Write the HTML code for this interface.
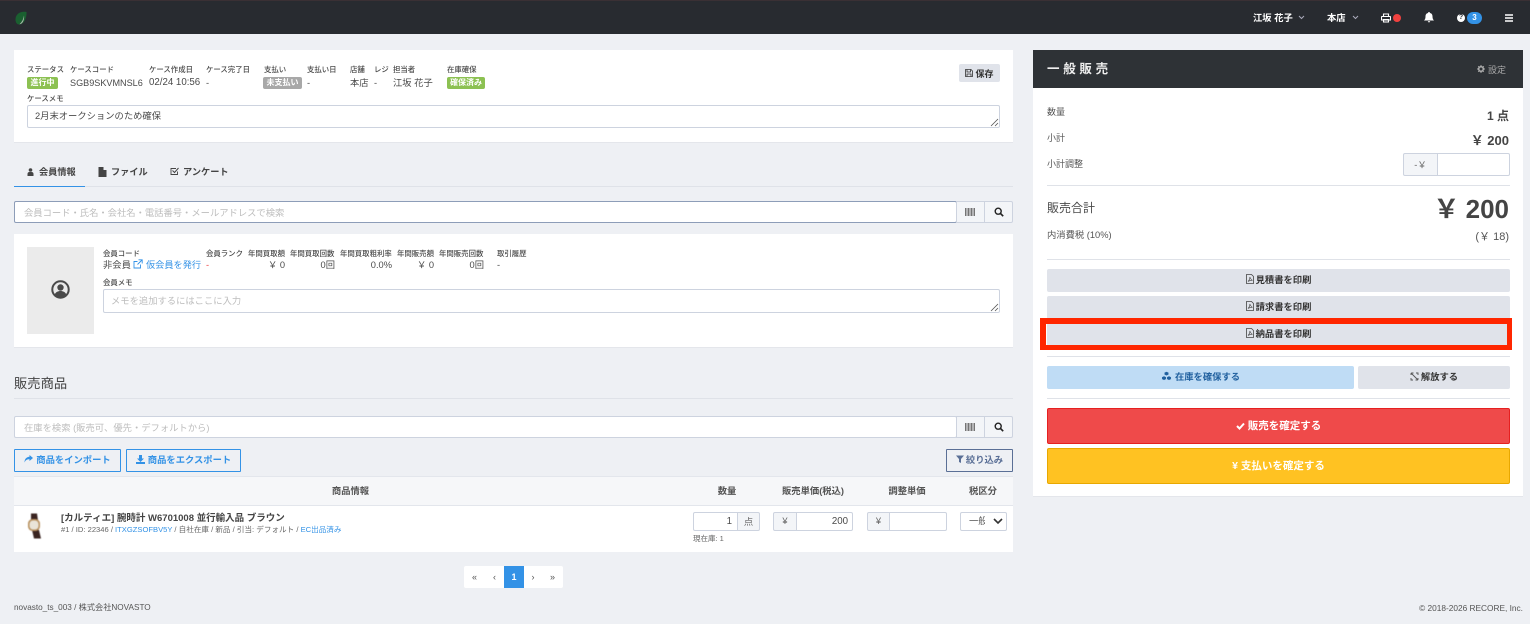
<!DOCTYPE html>
<html lang="ja">
<head>
<meta charset="utf-8">
<title>一般販売</title>
<style>
html,body{margin:0;padding:0;width:1530px;height:624px;overflow:hidden;background:#eef0f4;}
body{position:relative;font-family:"Liberation Sans","Noto Sans CJK JP",sans-serif;color:#4a4a4a;}
.a{position:absolute;box-sizing:border-box;}
.t{position:absolute;white-space:nowrap;line-height:12px;height:12px;}
.r{text-align:right;}
.c{text-align:center;}
.l{font-size:7.400px;color:#4a4a4a;font-weight:500;}
.v{font-size:9.300px;color:#4a4a4a;}
.b{font-weight:700;}
.btn{position:absolute;box-sizing:border-box;border-radius:2px;display:flex;align-items:center;justify-content:center;white-space:nowrap;font-weight:700;}
.p3{padding-bottom:3px;}
.p1{padding-bottom:1px;}
.in{position:absolute;box-sizing:border-box;background:#fff;border:1px solid #cdd3df;border-radius:2px;}
.ad{position:absolute;box-sizing:border-box;background:#f3f5f8;border:1px solid #cdd3df;display:flex;align-items:center;justify-content:center;}
.tx{padding-bottom:2px;}
.hr{position:absolute;height:1px;background:#dfe2e8;}
svg{display:block;flex:none;}
.pg{position:absolute;top:566px;height:22px;display:flex;align-items:center;justify-content:center;font-size:9px;color:#555;}
</style>
</head>
<body>

<!-- navbar -->
<div class="a" style="left:0;top:0;width:1530px;height:34px;background:#282b30;border-top:1px solid #3a3034;"></div>
<svg class="a" style="left:14px;top:11px" width="14" height="14" viewBox="0 0 14 14"><path d="M12.500 1C6.500 0 1.500 3 1.500 8.500c0 3 1.500 5 3.500 5C10 13.500 12.800 7 12.500 1z" fill="#1a6030"/><path d="M10 4.500C9.500 8 8 11 5.500 13.200 8 13.500 10.700 9.500 10 4.500z" fill="#aab5aa"/></svg>
<div class="t b" style="left:1253px;top:12px;font-size:9.300px;color:#fff">江坂 花子</div>
<svg class="a" style="left:1298px;top:15px" width="7" height="5" viewBox="0 0 7 5"><path d="M1 1l2.500 2.500L6 1" fill="none" stroke="#aab" stroke-width="1"/></svg>
<div class="t b" style="left:1327px;top:12px;font-size:9.300px;color:#fff">本店</div>
<svg class="a" style="left:1352px;top:15px" width="7" height="5" viewBox="0 0 7 5"><path d="M1 1l2.500 2.500L6 1" fill="none" stroke="#aab" stroke-width="1"/></svg>
<svg class="a" style="left:1381px;top:13px" width="10" height="10" viewBox="0 0 10 10"><path d="M2.500 3.500V1h5v2.500M1 3.500h8a.5.5 0 0 1 .5.5v3H.5V4a.5.5 0 0 1 .5-.5zM2.500 6.500h5V9h-5z" fill="none" stroke="#fff" stroke-width="1.100"/></svg>
<div class="a" style="left:1393px;top:14px;width:8px;height:8px;border-radius:50%;background:#f0413f"></div>
<svg class="a" style="left:1424px;top:12px" width="10" height="11" viewBox="0 0 10 11"><path d="M5 0a1 1 0 0 1 1 1c2 .5 2.500 2 2.500 3.500 0 2 .5 3 1.500 4H0c1-1 1.500-2 1.500-4C1.500 3 2 1.500 4 1a1 1 0 0 1 1-1zM3.800 9.200h2.400A1.200 1.200 0 0 1 3.800 9.200z" fill="#fff"/></svg>
<div class="a" style="left:1457px;top:14px;width:8px;height:8px;border-radius:50%;background:#fff;color:#282b30;font-size:7px;font-weight:700;line-height:8px;text-align:center">?</div>
<div class="a" style="left:1467px;top:12px;width:15px;height:12px;border-radius:6px;background:#3392e6;color:#fff;font-size:8px;font-weight:700;line-height:12px;text-align:center">3</div>
<svg class="a" style="left:1505px;top:14px" width="8" height="8" viewBox="0 0 8 8"><path d="M0 1h8M0 4h8M0 7h8" stroke="#fff" stroke-width="1.500"/></svg>

<!-- case card -->
<div class="a" style="left:14px;top:50px;width:999px;height:93px;background:#fff;border-bottom:1px solid #e4e6eb"></div>
<div class="t l" style="left:27px;top:64px">ステータス</div>
<div class="t l" style="left:70px;top:64px">ケースコード</div>
<div class="t l" style="left:149px;top:64px">ケース作成日</div>
<div class="t l" style="left:206px;top:64px">ケース完了日</div>
<div class="t l" style="left:264px;top:64px">支払い</div>
<div class="t l" style="left:307px;top:64px">支払い日</div>
<div class="t l" style="left:350px;top:64px">店舗</div>
<div class="t l" style="left:374px;top:64px">レジ</div>
<div class="t l" style="left:393px;top:64px">担当者</div>
<div class="t l" style="left:447px;top:64px">在庫確保</div>
<div class="a b" style="left:27px;top:77px;width:31px;height:12px;background:#8cc152;border-radius:2px;color:#fff;font-size:8px;line-height:12px;text-align:center">進行中</div>
<div class="t v" style="left:70px;top:77px;font-size:9.100px">SGB9SKVMNSL6</div>
<div class="t v" style="left:149px;top:77px;font-size:9.700px">02/24 10:56</div>
<div class="t v" style="left:206px;top:77px">-</div>
<div class="a b" style="left:263px;top:77px;width:39px;height:12px;background:#a8a8a8;border-radius:2px;color:#fff;font-size:8px;line-height:12px;text-align:center">未支払い</div>
<div class="t v" style="left:307px;top:77px">-</div>
<div class="t v" style="left:350px;top:77px">本店</div>
<div class="t v" style="left:374px;top:77px">-</div>
<div class="t v" style="left:393px;top:77px">江坂 花子</div>
<div class="a b" style="left:447px;top:77px;width:38px;height:12px;background:#8cc152;border-radius:2px;color:#fff;font-size:8px;line-height:12px;text-align:center">確保済み</div>
<div class="t l" style="left:27px;top:93px">ケースメモ</div>
<div class="in" style="left:27px;top:105px;width:973px;height:23px"></div>
<div class="t" style="left:35px;top:110px;font-size:9.300px;color:#4a4a4a">2月末オークションのため確保</div>
<svg class="a" style="left:990px;top:118px" width="9" height="9" viewBox="0 0 9 9"><path d="M1 8l7-7M5 8l3-3" stroke="#555" stroke-width=".8"/></svg>
<div class="btn" style="left:959px;top:64px;width:41px;height:18px;background:#e0e3ea;color:#333;font-size:9px;gap:2px"><svg width="8" height="8" viewBox="0 0 8 8"><path d="M.5.5h5.500l1.500 1.500v5.500h-7zM2 .5v2.500h3.500V.5M2 7.500V5h4v2.500" fill="none" stroke="#333" stroke-width=".8"/></svg>保存</div>

<!-- tabs -->
<div class="hr" style="left:14px;top:186px;width:999px"></div>
<div class="a" style="left:14px;top:185.500px;width:71px;height:1.500px;background:#3392e6"></div>
<svg class="a" style="left:27px;top:168px" width="7" height="8" viewBox="0 0 7 8"><circle cx="3.500" cy="2" r="1.800" fill="#444"/><path d="M.5 8V6a2 2 0 0 1 2-2h2a2 2 0 0 1 2 2v2z" fill="#444"/></svg>
<div class="t b" style="left:39px;top:166px;font-size:9.200px;color:#444">会員情報</div>
<svg class="a" style="left:98px;top:167px" width="9" height="10" viewBox="0 0 9 10"><path d="M.5 0h5l3 3v7h-8zM5.500 0v3h3" fill="#444"/></svg>
<div class="t b" style="left:111px;top:166px;font-size:9.200px;color:#444">ファイル</div>
<svg class="a" style="left:170px;top:167px" width="9" height="9" viewBox="0 0 9 9"><path d="M7.500 4.500v3h-6.500v-6h5" fill="none" stroke="#444" stroke-width=".9"/><path d="M2.500 3.500l2 2L8.500 1" fill="none" stroke="#444" stroke-width="1"/></svg>
<div class="t b" style="left:183px;top:166px;font-size:9.200px;color:#444">アンケート</div>

<!-- member search -->
<div class="in" style="left:14px;top:201px;width:943px;height:22px;border-color:#8d9db8"></div>
<div class="t" style="left:24px;top:207px;font-size:9.300px;color:#bdbdbd">会員コード・氏名・会社名・電話番号・メールアドレスで検索</div>
<div class="ad" style="left:956px;top:201px;width:29px;height:22px"><svg width="11" height="8" viewBox="0 0 11 8"><path d="M.5 0v8M2 0v8M3.500 0v8M5 0v8M6.500 0v8M8 0v8M9.500 0v8" stroke="#666" stroke-width=".9"/></svg></div>
<div class="ad" style="left:984px;top:201px;width:29px;height:22px;border-radius:0 2px 2px 0"><svg width="10" height="10" viewBox="0 0 10 10"><circle cx="4.200" cy="4.200" r="3" fill="none" stroke="#222" stroke-width="1.400"/><path d="M6.500 6.500L9.200 9.200" stroke="#222" stroke-width="1.600"/></svg></div>

<!-- member card -->
<div class="a" style="left:14px;top:234px;width:999px;height:114px;background:#fff;border-bottom:1px solid #e4e6eb"></div>
<div class="a" style="left:27px;top:247px;width:67px;height:87px;background:#ebebeb"></div>
<svg class="a" style="left:51px;top:280px" width="19" height="19" viewBox="0 0 19 19"><circle cx="9.500" cy="9.500" r="8.200" fill="none" stroke="#4a4a4a" stroke-width="2"/><circle cx="9.500" cy="7.500" r="3.200" fill="#4a4a4a"/><path d="M3.500 15c1-3 3.500-4 6-4s5 1 6 4c-3 3-9 3-12 0z" fill="#4a4a4a"/></svg>
<div class="t l" style="left:103px;top:248px">会員コード</div>
<div class="t l" style="left:206px;top:248px">会員ランク</div>
<div class="t l" style="left:248px;top:248px">年間買取額</div>
<div class="t l" style="left:290px;top:248px">年間買取回数</div>
<div class="t l" style="left:340px;top:248px">年間買取粗利率</div>
<div class="t l" style="left:397px;top:248px">年間販売額</div>
<div class="t l" style="left:439px;top:248px">年間販売回数</div>
<div class="t l" style="left:497px;top:248px">取引履歴</div>
<div class="t v" style="left:103px;top:259px">非会員</div>
<svg class="a" style="left:133px;top:259px" width="10" height="10" viewBox="0 0 10 10"><path d="M7.500 5.500V9H1V2.500h3.500M5.500.8h3.700v3.700M9 1L4.500 5.500" fill="none" stroke="#3392e6" stroke-width=".9"/></svg>
<div class="t v" style="left:146px;top:259px;color:#3392e6;font-size:9.200px">仮会員を発行</div>
<div class="t v" style="left:206px;top:259px;color:#e44">-</div>
<div class="t v r" style="left:248px;top:259px;width:37px">￥ 0</div>
<div class="t v r" style="left:290px;top:259px;width:45px">0回</div>
<div class="t v r" style="left:340px;top:259px;width:52px">0.0%</div>
<div class="t v r" style="left:397px;top:259px;width:37px">￥ 0</div>
<div class="t v r" style="left:439px;top:259px;width:45px">0回</div>
<div class="t v" style="left:497px;top:259px">-</div>
<div class="t l" style="left:103px;top:277px">会員メモ</div>
<div class="in" style="left:103px;top:289px;width:897px;height:24px"></div>
<div class="t" style="left:111px;top:295px;font-size:9.300px;color:#bdbdbd">メモを追加するにはここに入力</div>
<svg class="a" style="left:990px;top:303px" width="9" height="9" viewBox="0 0 9 9"><path d="M1 8l7-7M5 8l3-3" stroke="#555" stroke-width=".8"/></svg>

<!-- products -->
<div class="t" style="left:14px;top:376px;font-size:13.300px;line-height:16px;height:16px;color:#444">販売商品</div>
<div class="hr" style="left:14px;top:398px;width:999px"></div>
<div class="in" style="left:14px;top:416px;width:943px;height:22px"></div>
<div class="t" style="left:24px;top:422px;font-size:9.300px;color:#bdbdbd">在庫を検索 (販売可、優先・デフォルトから)</div>
<div class="ad" style="left:956px;top:416px;width:29px;height:22px"><svg width="11" height="8" viewBox="0 0 11 8"><path d="M.5 0v8M2 0v8M3.500 0v8M5 0v8M6.500 0v8M8 0v8M9.500 0v8" stroke="#666" stroke-width=".9"/></svg></div>
<div class="ad" style="left:984px;top:416px;width:29px;height:22px;border-radius:0 2px 2px 0"><svg width="10" height="10" viewBox="0 0 10 10"><circle cx="4.200" cy="4.200" r="3" fill="none" stroke="#222" stroke-width="1.400"/><path d="M6.500 6.500L9.200 9.200" stroke="#222" stroke-width="1.600"/></svg></div>

<div class="btn p3" style="left:14px;top:449px;width:107px;height:23px;border:1px solid #3392e6;border-radius:1px;color:#3392e6;font-size:9.300px;gap:3px"><svg width="9" height="8" viewBox="0 0 9 8"><path d="M5.500 0L9 3 5.500 6V4.200C3 4.200 1.500 5 .5 7.500.5 4 2.500 2 5.500 1.800z" fill="#3392e6"/></svg>商品をインポート</div>
<div class="btn p3" style="left:126px;top:449px;width:115px;height:23px;border:1px solid #3392e6;border-radius:1px;color:#3392e6;font-size:9.300px;gap:3px"><svg width="9" height="9" viewBox="0 0 9 9"><path d="M3 0h3v3.500h2L4.500 7 1 3.500h2zM0 7h9v2H0z" fill="#3392e6"/></svg>商品をエクスポート</div>
<div class="btn p3" style="left:946px;top:449px;width:67px;height:23px;border:1px solid #5a6f96;border-radius:1px;color:#5a6f96;font-size:9.300px;gap:2px"><svg width="8" height="8" viewBox="0 0 8 8"><path d="M0 .5h8L5 4v4L3 7V4z" fill="#5a6f96"/></svg>絞り込み</div>

<div class="a" style="left:14px;top:476px;width:999px;height:30px;background:#f6f7f9;border-top:1px solid #e3e6ec;border-bottom:1px solid #e3e6ec"></div>
<div class="t b c" style="left:14px;top:485px;width:673px;font-size:9.300px;color:#555">商品情報</div>
<div class="t b c" style="left:687px;top:485px;width:80px;font-size:9.300px;color:#555">数量</div>
<div class="t b c" style="left:767px;top:485px;width:92px;font-size:9.300px;color:#555">販売単価(税込)</div>
<div class="t b c" style="left:861px;top:485px;width:92px;font-size:9.300px;color:#555">調整単価</div>
<div class="t b c" style="left:953px;top:485px;width:60px;font-size:9.300px;color:#555">税区分</div>

<div class="a" style="left:14px;top:506px;width:999px;height:46px;background:#fff"></div>
<svg class="a" style="left:25px;top:512px;filter:blur(.4px)" width="20" height="28" viewBox="0 0 20 28"><path d="M6 1.500h6l1 7H6zM7 18h7l2 8.500H9z" fill="#3a2420"/><rect x="3" y="7" width="12" height="12" rx="4.500" fill="#b8915f"/><rect x="4.500" y="8.500" width="9" height="9" rx="3.500" fill="#e9e4d8"/></svg>
<div class="t b" style="left:61px;top:513px;font-size:9.500px;color:#444">[カルティエ] 腕時計 W6701008 並行輸入品 ブラウン</div>
<div class="t" style="left:61px;top:524px;font-size:7.600px;color:#666">#1 / ID: 22346 / <span style="color:#3392e6">ITXGZSOFBV5Y</span> / 自社在庫 / 新品 / 引当: デフォルト / <span style="color:#3392e6">EC出品済み</span></div>

<div class="in" style="left:693px;top:512px;width:45px;height:19px;border-radius:2px 0 0 2px"></div>
<div class="t r" style="left:693px;top:516px;width:39px;font-size:9.700px">1</div>
<div class="ad tx" style="left:737px;top:512px;width:23px;height:19px;font-size:9.300px;color:#666;border-radius:0 2px 2px 0">点</div>
<div class="t" style="left:693px;top:533px;font-size:7.500px;color:#666">現在庫: 1</div>

<div class="ad tx" style="left:773px;top:512px;width:24px;height:19px;font-size:9.300px;color:#666;border-radius:2px 0 0 2px">¥</div>
<div class="in" style="left:796px;top:512px;width:57px;height:19px;border-radius:0 2px 2px 0"></div>
<div class="t r" style="left:796px;top:516px;width:52px;font-size:9.700px">200</div>

<div class="ad tx" style="left:867px;top:512px;width:23px;height:19px;font-size:9.300px;color:#666;border-radius:2px 0 0 2px">¥</div>
<div class="in" style="left:889px;top:512px;width:58px;height:19px;border-radius:0 2px 2px 0"></div>

<div class="in" style="left:960px;top:512px;width:47px;height:19px"></div>
<div class="a" style="left:969px;top:515px;width:16px;height:13px;overflow:hidden;font-size:9.300px;line-height:13px;white-space:nowrap;color:#555">一般</div>
<svg class="a" style="left:993px;top:518px" width="10" height="7" viewBox="0 0 10 7"><path d="M1 1l4 4 4-4" fill="none" stroke="#333" stroke-width="1.600"/></svg>

<!-- pagination -->
<div class="a" style="left:464px;top:566px;width:99px;height:22px;background:#fff;border-radius:2px"></div>
<div class="pg" style="left:464px;width:21px">«</div>
<div class="pg" style="left:485px;width:19px">‹</div>
<div class="pg b" style="left:504px;width:20px;background:#3392e6;color:#fff">1</div>
<div class="pg" style="left:524px;width:18px">›</div>
<div class="pg" style="left:542px;width:21px">»</div>

<!-- footer -->
<div class="t" style="left:14px;top:602px;font-size:8.200px;color:#555">novasto_ts_003 / 株式会社NOVASTO</div>
<div class="t r" style="left:1223px;top:602px;width:300px;font-size:8.300px;color:#555">© 2018-2026 RECORE, Inc.</div>

<!-- right panel -->
<div class="a" style="left:1033px;top:50px;width:490px;height:447px;background:#fff;border-bottom:1px solid #e4e6eb"></div>
<div class="a" style="left:1033px;top:50px;width:490px;height:38px;background:#2e3236"></div>
<div class="t b" style="left:1047px;top:62px;font-size:12.500px;line-height:14px;height:14px;letter-spacing:3.700px;color:#eee">一般販売</div>
<svg class="a" style="left:1477px;top:65px" width="8" height="8" viewBox="0 0 8 8"><circle cx="4" cy="4" r="2.300" fill="none" stroke="#aaa" stroke-width="1.600"/><path d="M4 0v1.500M4 6.500V8M0 4h1.500M6.500 4H8M1.200 1.200l1 1M5.800 5.800l1 1M6.800 1.200l-1 1M2.200 5.800l-1 1" stroke="#aaa" stroke-width="1"/></svg>
<div class="t" style="left:1488px;top:64px;font-size:9px;color:#aaa">設定</div>

<div class="t" style="left:1047px;top:106px;font-size:9px;color:#555">数量</div>
<div class="t b r" style="left:1409px;top:110px;width:100px;font-size:12px;color:#444">1 点</div>
<div class="t" style="left:1047px;top:132px;font-size:9px;color:#555">小計</div>
<div class="t b r" style="left:1409px;top:135px;width:100px;font-size:13px;color:#444">￥ 200</div>
<div class="t" style="left:1047px;top:158px;font-size:9px;color:#555">小計調整</div>
<div class="ad tx" style="left:1403px;top:153px;width:35px;height:23px;font-size:9.300px;color:#666;border-radius:2px 0 0 2px">-￥</div>
<div class="in" style="left:1437px;top:153px;width:73px;height:23px;border-radius:0 2px 2px 0"></div>
<div class="hr" style="left:1047px;top:185px;width:463px"></div>
<div class="t" style="left:1047px;top:202px;font-size:12px;color:#4a4a4a">販売合計</div>
<div class="t b r" style="left:1359px;top:193px;width:150px;font-size:26px;line-height:32px;height:32px;color:#444;word-spacing:-1px">￥ 200</div>
<div class="t" style="left:1047px;top:229px;font-size:9.300px;color:#555">内消費税 (10%)</div>
<div class="t r" style="left:1409px;top:231px;width:100px;font-size:11px;color:#555">(￥ 18)</div>
<div class="hr" style="left:1047px;top:259px;width:463px"></div>

<div class="btn p3" style="left:1047px;top:269px;width:463px;height:23px;background:#e0e3ea;color:#333;font-size:9.300px;gap:2px"><svg width="8" height="10" viewBox="0 0 8 10"><path d="M.5.5h5l2 2v7h-7z" fill="none" stroke="#444" stroke-width=".8"/><path d="M2 7.500c1-1 2-3 1.800-4.500.8 1.500 1.500 3 2.700 3.300-1.500 0-3 .3-4.500 1.200z" fill="none" stroke="#444" stroke-width=".6"/></svg>見積書を印刷</div>
<div class="btn p3" style="left:1047px;top:296px;width:463px;height:23px;background:#e0e3ea;color:#333;font-size:9.300px;gap:2px"><svg width="8" height="10" viewBox="0 0 8 10"><path d="M.5.5h5l2 2v7h-7z" fill="none" stroke="#444" stroke-width=".8"/><path d="M2 7.500c1-1 2-3 1.800-4.500.8 1.500 1.500 3 2.700 3.300-1.500 0-3 .3-4.500 1.200z" fill="none" stroke="#444" stroke-width=".6"/></svg>請求書を印刷</div>
<div class="btn p3" style="left:1047px;top:323px;width:463px;height:23px;background:#e0e3ea;color:#333;font-size:9.300px;gap:2px"><svg width="8" height="10" viewBox="0 0 8 10"><path d="M.5.5h5l2 2v7h-7z" fill="none" stroke="#444" stroke-width=".8"/><path d="M2 7.500c1-1 2-3 1.800-4.500.8 1.500 1.500 3 2.700 3.300-1.500 0-3 .3-4.500 1.200z" fill="none" stroke="#444" stroke-width=".6"/></svg>納品書を印刷</div>
<div class="a" style="left:1040px;top:318px;width:472px;height:32px;border:5px solid #ff2600;border-left-width:6px;border-top-width:6px;outline:0"></div>
<div class="hr" style="left:1047px;top:356px;width:463px"></div>

<div class="btn p3" style="left:1047px;top:366px;width:307px;height:23px;background:#bfdcf5;color:#1f5f9e;font-size:9.300px;gap:3px"><svg width="11" height="10" viewBox="0 0 11 10"><path d="M5.500.5l2.200 1v2.200l-2.200 1-2.200-1V1.500zM3 5l2.200 1v2.200L3 9.300.8 8.200V6zM8 5l2.200 1v2.200L8 9.300 5.800 8.200V6z" fill="#1f5f9e" stroke="#bfdcf5" stroke-width=".5"/></svg>在庫を確保する</div>
<div class="btn p3" style="left:1358px;top:366px;width:152px;height:23px;background:#e0e3ea;color:#333;font-size:9.300px;gap:2px"><svg width="9" height="9" viewBox="0 0 9 9"><path d="M1 3V1.500A.8.800 0 0 1 2 1h1.500M8 6v1.500a.8.800 0 0 1-1 .5H5.500M1 1l7 7M6 1h2v2M1 6v2h2" fill="none" stroke="#555" stroke-width=".9"/></svg>解放する</div>
<div class="hr" style="left:1047px;top:398px;width:463px"></div>

<div class="btn p1" style="left:1047px;top:408px;width:463px;height:36px;background:#ef4a4a;border:1px solid #e62020;color:#fff;font-size:10.500px;gap:3px"><svg width="9" height="8" viewBox="0 0 9 8"><path d="M1 4l2.500 2.500L8 1.500" fill="none" stroke="#fff" stroke-width="2"/></svg>販売を確定する</div>
<div class="btn p1" style="left:1047px;top:448px;width:463px;height:36px;background:#ffc222;border:1px solid #e8a800;color:#fff;font-size:10.500px;gap:3px">¥ 支払いを確定する</div>

</body>
</html>
